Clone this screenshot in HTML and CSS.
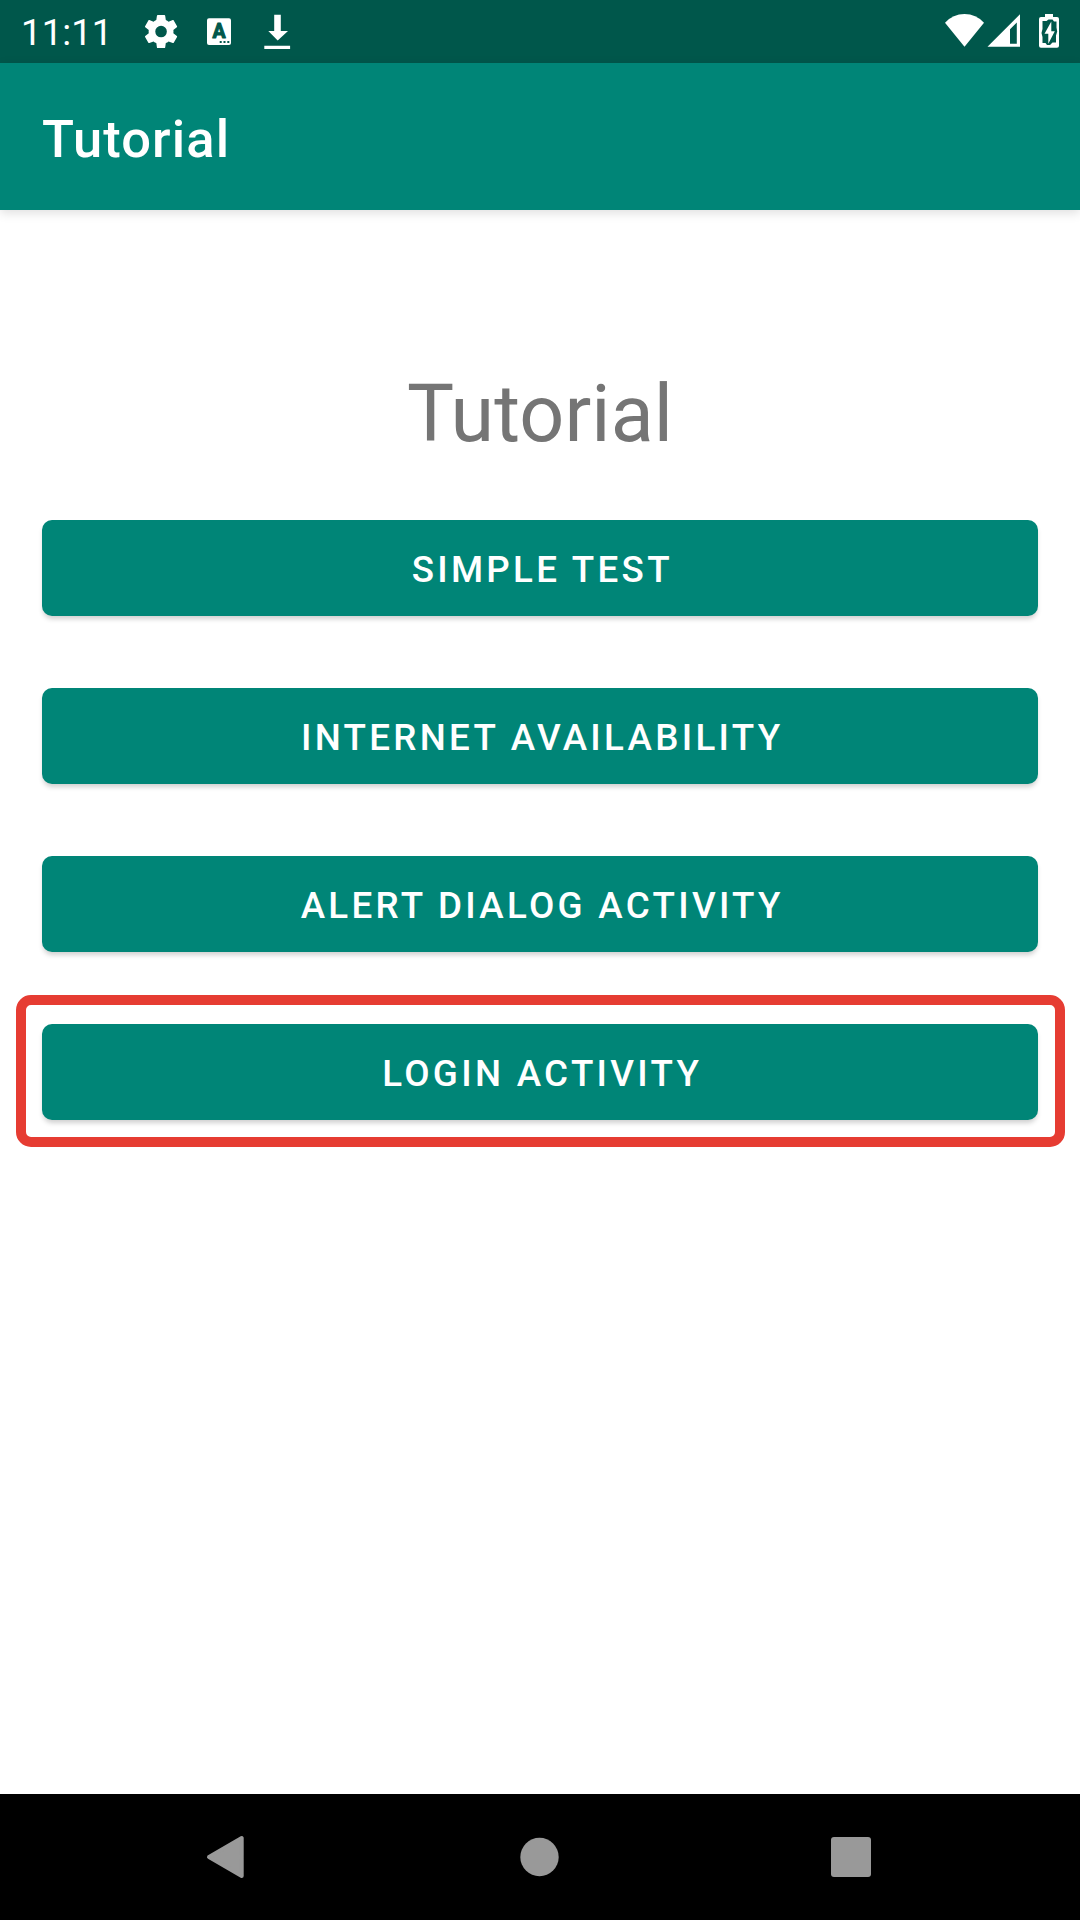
FILE: index.html
```html
<!DOCTYPE html>
<html lang="en">
<head>
<meta charset="utf-8">
<title>Tutorial</title>
<link rel="stylesheet" href="styles.css">
</head>
<body>
<div class="status">
  <span class="clock">11:11</span>
  <svg class="status-icons" width="160" height="63" viewBox="140 0 160 63" fill="#fff">
    <g transform="translate(141.200 11.700) scale(1.655)"><path fill-rule="evenodd" d="M19.430 12.980c.04-.32.07-.64.07-.98s-.03-.66-.07-.98l2.110-1.650c.19-.15.24-.42.12-.64l-2-3.460c-.12-.22-.39-.3-.61-.22l-2.490 1c-.52-.4-1.080-.73-1.690-.98l-.38-2.650C14.460 2.180 14.250 2 14 2h-4c-.25 0-.46.18-.49.42l-.38 2.650c-.61.25-1.170.59-1.690.98l-2.490-1c-.23-.09-.49 0-.61.22l-2 3.460c-.13.22-.07.49.12.64l2.110 1.650c-.04.32-.07.65-.07.98s.03.66.07.98l-2.110 1.650c-.19.15-.24.42-.12.64l2 3.460c.12.22.39.3.61.22l2.490-1c.52.4 1.080.73 1.690.98l.38 2.650c.03.24.24.42.49.42h4c.25 0 .46-.18.49-.42l.38-2.650c.61-.25 1.170-.59 1.690-.98l2.490 1c.23.09.49 0 .61-.22l2-3.460c.12-.22.07-.49-.12-.64zM12 15.500a3.500 3.500 0 1 1 0-7 3.500 3.500 0 0 1 0 7z"/></g>
    <rect x="207" y="18.300" width="24" height="26.600" rx="2"/>
    <text class="badge-letter" x="219" y="38" text-anchor="middle">A</text>
    <path fill="#00574b" d="M219.700 41h2v2h-2zM223.500 41h2v2h-2zM227.300 41h2v2h-2z"/>
    <path d="M274.200 14.700h6.600V31h7.200l-10.300 9.400L268.300 31h5.900zM264.300 45.700h25.800v3.400h-25.800z"/>
  </svg>
  <svg class="signals" width="130" height="63" viewBox="940 0 130 63" fill="#fff">
    <path d="M945 22.700Q953 14 964.500 14T984 22.700L964.500 46.800z"/>
    <path fill-rule="evenodd" d="M987.500 46.700L1020 14.300v32.400zM1010 43.700h6.800v-21.200l-6.800 6.800z"/>
    <path d="M1045 14h8v3h4q2 0 2 2v26.700q0 2-2 2h-16q-2 0-2-2V19q0-2 2-2h4z"/>
    <path fill="#00574b" d="M1042.500 21h4l2-1.500h4l1.500 2h2.500v6l.7 4-1.200 4v7h-3.500l-2.500 2.500h-3l-1.500-2h-3v-6l-1-4 1-4z"/>
    <path d="M1051.300 21.500l-6.800 12.300h3.800v10l6.500-12.600h-3.500z"/>
  </svg>
</div>
<header class="appbar">Tutorial</header>
<main>
  <h1>Tutorial</h1>
  <button>Simple test</button>
  <button>Internet availability</button>
  <button>Alert dialog activity</button>
  <button class="selected">Login activity</button>
</main>
<nav>
  <svg width="42" height="44" viewBox="0 0 42 44"><path d="M4 22L36.700 3V41z" stroke-width="4" stroke-linejoin="round"/></svg>
  <svg width="42" height="44" viewBox="0 0 42 44"><circle cx="21.500" cy="22" r="19.200"/></svg>
  <svg width="42" height="44" viewBox="0 0 42 44"><rect x="1" y="2" width="40" height="40" rx="3"/></svg>
</nav>
</body>
</html>
```
FILE: styles.css
```css
* { box-sizing: border-box; }
body { margin: 0; height: 1920px; display: flex; flex-direction: column; font-family: Roboto, sans-serif; background: #fff; }
.status { height: 63px; background: #00574b; color: #fff; display: flex; align-items: center; padding: 0 10px 0 21px; }
.clock { font-size: 36.750px; width: 119px; padding-top: 2px; }
.badge-letter { font: 700 19.500px Roboto, sans-serif; fill: #00574b; stroke: #00574b; stroke-width: 1px; stroke-linejoin: round; }
.signals { margin-left: auto; }
.appbar { height: 147px; background: #008577; color: #fff; font-size: 52.500px; font-weight: 500; letter-spacing: 1.100px; line-height: 147px; padding: 3px 42px 0; box-shadow: 0 3px 10px rgba(0, 0, 0, 0.130); }
main { flex: 1; padding: 157px 42px 0; display: flex; flex-direction: column; }
h1 { margin: 0 0 59px; font-size: 79px; line-height: 94px; font-weight: 400; letter-spacing: 0.100px; color: #757575; text-align: center; }
button { flex: none; height: 96px; margin: 0 0 72px; border: 0; border-radius: 10px; background: #008577; color: #fff; font: 500 36.750px Roboto, sans-serif; letter-spacing: 3.300px; text-transform: uppercase; padding: 2px 0 0 4.500px; box-shadow: 0 4px 5px -1px rgba(0, 0, 0, 0.190); }
.selected { position: relative; }
.selected::after { content: ""; position: absolute; inset: -29px -26.500px -27px -25.700px; border: 10px solid #e63c32; border-radius: 15px; }
nav { height: 126px; background: #000; display: flex; justify-content: space-between; align-items: center; padding: 0 208px 0 205px; }
nav svg { fill: #999; stroke: #999; stroke-width: 0; }
```
